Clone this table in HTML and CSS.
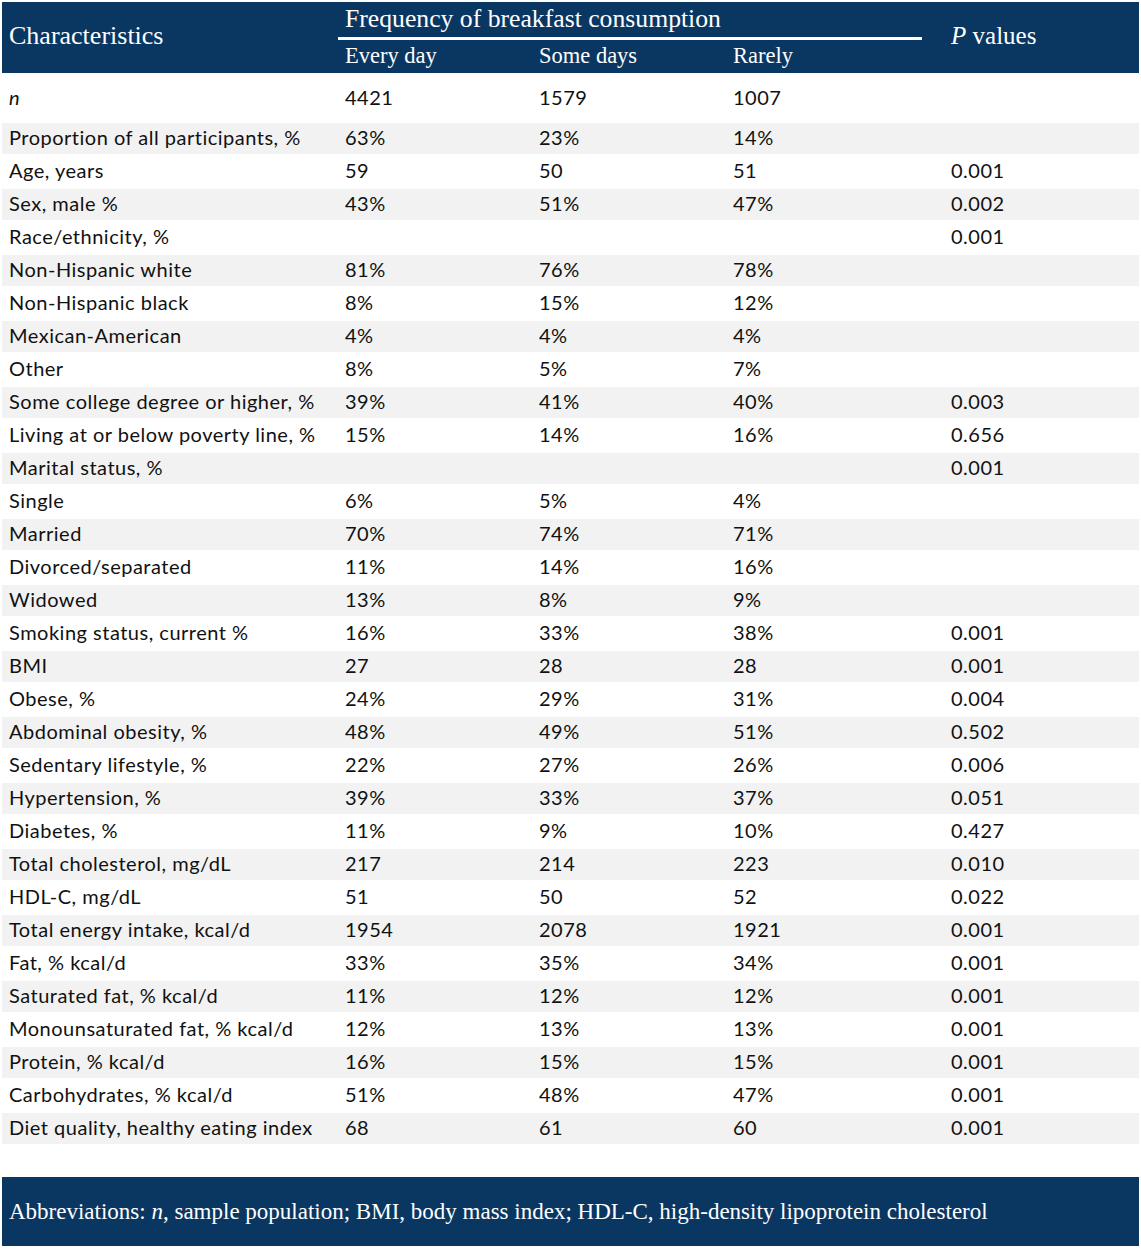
FILE: index.html
```html
<!DOCTYPE html>
<html>
<head>
<meta charset="utf-8">
<link rel="stylesheet" href="styles.css">
</head>
<body>
<div class="table">
  <div class="head">
    <div class="h-char">Characteristics</div>
    <div class="h-group">Frequency of breakfast consumption</div>
    <div class="h-p"><i>P</i> values</div>
    <div class="h-sub">Every day</div>
    <div class="h-sub">Some days</div>
    <div class="h-sub">Rarely</div>
  </div>
  <div class="row first"><div><i>n</i></div><div>4421</div><div>1579</div><div>1007</div><div></div></div>
  <div class="row alt"><div>Proportion of all participants, %</div><div>63%</div><div>23%</div><div>14%</div><div></div></div>
  <div class="row"><div>Age, years</div><div>59</div><div>50</div><div>51</div><div>0.001</div></div>
  <div class="row alt"><div>Sex, male %</div><div>43%</div><div>51%</div><div>47%</div><div>0.002</div></div>
  <div class="row"><div>Race/ethnicity, %</div><div></div><div></div><div></div><div>0.001</div></div>
  <div class="row alt"><div>Non-Hispanic white</div><div>81%</div><div>76%</div><div>78%</div><div></div></div>
  <div class="row"><div>Non-Hispanic black</div><div>8%</div><div>15%</div><div>12%</div><div></div></div>
  <div class="row alt"><div>Mexican-American</div><div>4%</div><div>4%</div><div>4%</div><div></div></div>
  <div class="row"><div>Other</div><div>8%</div><div>5%</div><div>7%</div><div></div></div>
  <div class="row alt"><div>Some college degree or higher, %</div><div>39%</div><div>41%</div><div>40%</div><div>0.003</div></div>
  <div class="row"><div>Living at or below poverty line, %</div><div>15%</div><div>14%</div><div>16%</div><div>0.656</div></div>
  <div class="row alt"><div>Marital status, %</div><div></div><div></div><div></div><div>0.001</div></div>
  <div class="row"><div>Single</div><div>6%</div><div>5%</div><div>4%</div><div></div></div>
  <div class="row alt"><div>Married</div><div>70%</div><div>74%</div><div>71%</div><div></div></div>
  <div class="row"><div>Divorced/separated</div><div>11%</div><div>14%</div><div>16%</div><div></div></div>
  <div class="row alt"><div>Widowed</div><div>13%</div><div>8%</div><div>9%</div><div></div></div>
  <div class="row"><div>Smoking status, current %</div><div>16%</div><div>33%</div><div>38%</div><div>0.001</div></div>
  <div class="row alt"><div>BMI</div><div>27</div><div>28</div><div>28</div><div>0.001</div></div>
  <div class="row"><div>Obese, %</div><div>24%</div><div>29%</div><div>31%</div><div>0.004</div></div>
  <div class="row alt"><div>Abdominal obesity, %</div><div>48%</div><div>49%</div><div>51%</div><div>0.502</div></div>
  <div class="row"><div>Sedentary lifestyle, %</div><div>22%</div><div>27%</div><div>26%</div><div>0.006</div></div>
  <div class="row alt"><div>Hypertension, %</div><div>39%</div><div>33%</div><div>37%</div><div>0.051</div></div>
  <div class="row"><div>Diabetes, %</div><div>11%</div><div>9%</div><div>10%</div><div>0.427</div></div>
  <div class="row alt"><div>Total cholesterol, mg/dL</div><div>217</div><div>214</div><div>223</div><div>0.010</div></div>
  <div class="row"><div>HDL-C, mg/dL</div><div>51</div><div>50</div><div>52</div><div>0.022</div></div>
  <div class="row alt"><div>Total energy intake, kcal/d</div><div>1954</div><div>2078</div><div>1921</div><div>0.001</div></div>
  <div class="row"><div>Fat, % kcal/d</div><div>33%</div><div>35%</div><div>34%</div><div>0.001</div></div>
  <div class="row alt"><div>Saturated fat, % kcal/d</div><div>11%</div><div>12%</div><div>12%</div><div>0.001</div></div>
  <div class="row"><div>Monounsaturated fat, % kcal/d</div><div>12%</div><div>13%</div><div>13%</div><div>0.001</div></div>
  <div class="row alt"><div>Protein, % kcal/d</div><div>16%</div><div>15%</div><div>15%</div><div>0.001</div></div>
  <div class="row"><div>Carbohydrates, % kcal/d</div><div>51%</div><div>48%</div><div>47%</div><div>0.001</div></div>
  <div class="row alt"><div>Diet quality, healthy eating index</div><div>68</div><div>61</div><div>60</div><div>0.001</div></div>
  <div class="foot"><span>Abbreviations: <i>n</i>, sample population; BMI, body mass index; HDL-C, high-density lipoprotein cholesterol</span></div>
</div>
</body>
</html>
```
FILE: styles.css
```css
html, body {
  margin: 0;
  padding: 0;
  background: #ffffff;
}
.table {
  padding: 2px 2px 3px 2px;
  display: flex;
  flex-direction: column;
  gap: 2px;
}
.head {
  background: #0a3762;
  color: #ffffff;
  font-family: "Liberation Serif", "DejaVu Serif", serif;
  display: grid;
  grid-template-columns: 336px 194px 194px 218px 1fr;
  grid-template-rows: 38px 33px;
}
.h-char {
  grid-row: 1 / 3;
  grid-column: 1;
  align-self: center;
  padding-left: 7px;
  padding-bottom: 4px;
  font-size: 26px;
}
.h-group {
  grid-row: 1;
  grid-column: 2 / 5;
  margin-right: 22px;
  border-bottom: 3px solid #ffffff;
  padding-left: 7px;
  font-size: 25.7px;
  line-height: 34px;
}
.h-p {
  grid-row: 1 / 3;
  grid-column: 5;
  align-self: center;
  padding-left: 7px;
  padding-bottom: 4px;
  font-size: 25px;
}
.h-sub {
  grid-row: 2;
  padding-left: 7px;
  font-size: 22.5px;
  line-height: 32px;
}
.row {
  display: grid;
  grid-template-columns: 336px 194px 194px 218px 1fr;
  height: 31px;
  align-items: center;
  font-family: Lato, "Open Sans", sans-serif;
  font-size: 20px;
  letter-spacing: 0.5px;
  color: #111111;
}
.row > div {
  padding-left: 7px;
  padding-bottom: 3px;
  white-space: nowrap;
}
.row.first {
  height: 46px;
}
.row.alt {
  background: #f2f2f2;
}
.foot {
  margin-top: 31px;
  background: #0a3762;
  color: #ffffff;
  font-family: "Liberation Serif", "DejaVu Serif", serif;
  font-size: 23px;
  height: 69px;
  display: flex;
  align-items: center;
  padding-left: 7px;
}
```
